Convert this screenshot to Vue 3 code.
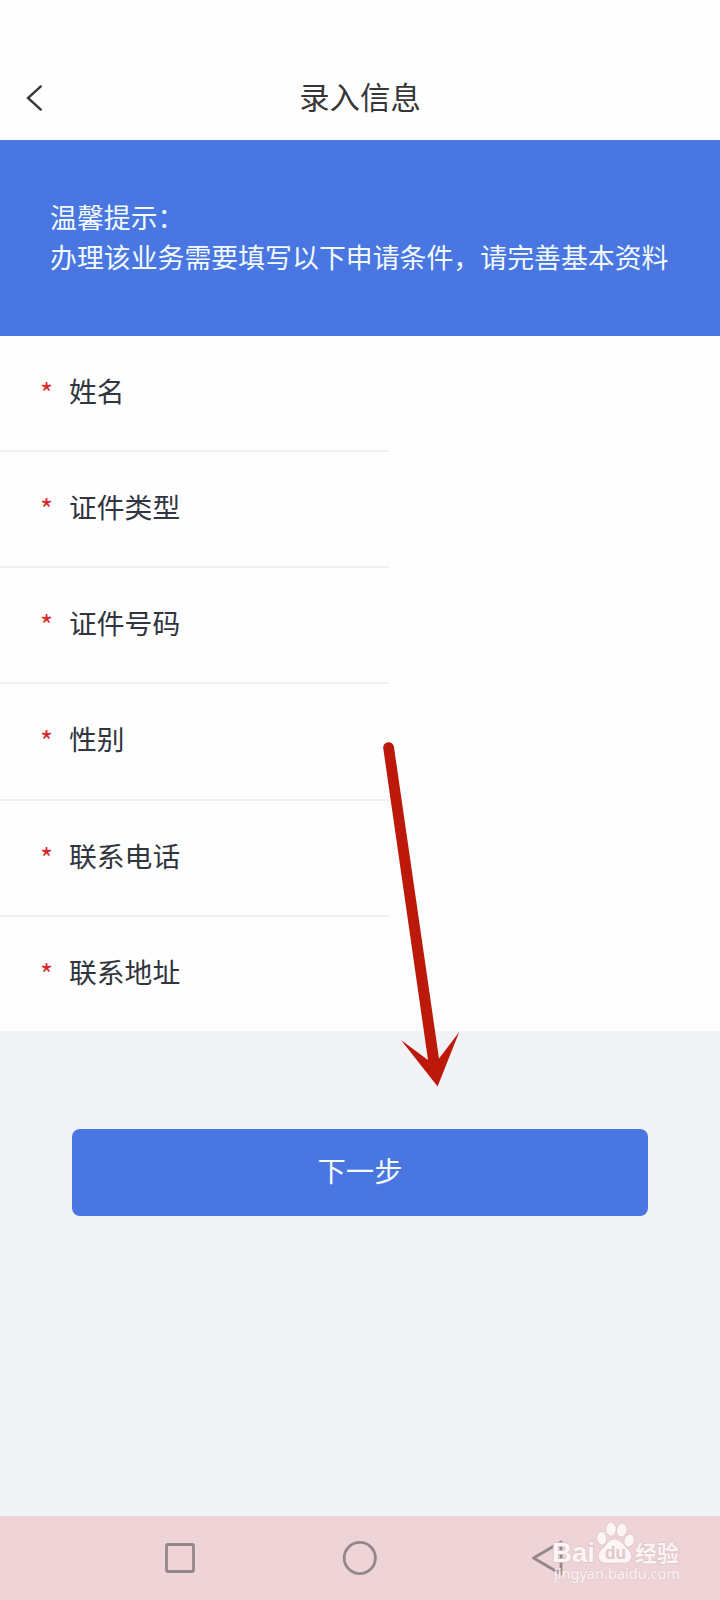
<script setup>
const fields = ['姓名', '证件类型', '证件号码', '性别', '联系电话', '联系地址']
</script>

<template>
  <div class="screen">
    <header class="header">
      <svg class="back" width="18" height="28" viewBox="0 0 18 28">
        <path d="M15.8 2.4 L3 14 L15.8 25.6" />
      </svg>
      <h1>录入信息</h1>
    </header>

    <section class="banner">
      <p>温馨提示：</p>
      <p>办理该业务需要填写以下申请条件，请完善基本资料</p>
    </section>

    <ul class="fields">
      <li v-for="name in fields" :key="name">
        <span class="star">*</span>
        <span class="label">{{ name }}</span>
      </li>
    </ul>

    <main class="action">
      <button type="button">下一步</button>
    </main>

    <nav class="nav">
      <svg width="40" height="40" viewBox="0 0 40 40">
        <rect x="6.5" y="6.5" width="27" height="27" rx="1.5" />
      </svg>
      <svg width="40" height="40" viewBox="0 0 40 40">
        <circle cx="19.8" cy="20" r="15.6" />
      </svg>
      <svg width="50" height="40" viewBox="0 0 50 40">
        <path d="M18.5 20 L46 4 V36 Z" />
      </svg>
    </nav>

    <svg class="arrow" width="130" height="350" viewBox="340 740 130 350">
      <path d="M383.2 748 A5.4 5.4 0 0 1 394 747.2 L439 1058.5 L459.2 1032 L437.6 1086.5 L401 1040 L428 1060 Z" />
    </svg>

    <svg class="watermark" width="136" height="68" viewBox="548 1518 136 68">
      <g class="mark">
        <text x="552" y="1561.8" class="brand" textLength="43" lengthAdjust="spacingAndGlyphs">Bai</text>
        <ellipse cx="601.7" cy="1538.3" rx="4.6" ry="6.4" transform="rotate(-8 601.7 1538.3)" />
        <ellipse cx="611" cy="1529.2" rx="4.8" ry="6.6" />
        <ellipse cx="621.8" cy="1530" rx="4.8" ry="6.6" transform="rotate(8 621.8 1530)" />
        <ellipse cx="629.2" cy="1540.5" rx="4.7" ry="6.2" transform="rotate(15 629.2 1540.5)" />
        <path d="M614.5 1539.5 C621 1539.5 623 1545 627 1548.5 C631 1552 632.5 1556 630.5 1559.5 C628 1564 623 1562.7 615 1562.7 C607 1562.7 602 1564 599.5 1559.5 C597.5 1556 599 1552 603 1548.5 C607 1545 608 1539.5 614.5 1539.5 Z" />
        <text x="635" y="1560.5" class="cn" textLength="44" lengthAdjust="spacingAndGlyphs">经验</text>
        <text x="554" y="1578.5" class="site" textLength="126" lengthAdjust="spacingAndGlyphs">jingyan.baidu.com</text>
      </g>
      <text x="605" y="1559" class="du" textLength="21" lengthAdjust="spacingAndGlyphs">du</text>
    </svg>
  </div>
</template>

<style>
body {
  margin: 0;
}
</style>

<style scoped>
.screen {
  position: relative;
  display: flex;
  flex-direction: column;
  width: 720px;
  height: 1600px;
  overflow: hidden;
  background: #f1f3f7;
  font-family: "Noto Sans CJK SC", sans-serif;
}
.header {
  display: grid;
  grid-template-columns: 60px 1fr 60px;
  align-items: center;
  box-sizing: border-box;
  height: 140px;
  padding-top: 56px;
  background: #fefefe;
}
.back {
  margin-left: 25px;
}
.back path {
  fill: none;
  stroke: #38393b;
  stroke-width: 2.4;
  stroke-linecap: round;
}
h1 {
  margin: 0;
  padding-bottom: 4px;
  color: #363636;
  font-size: 30.4px;
  font-weight: 400;
  line-height: 40px;
  text-align: center;
}
.banner {
  box-sizing: border-box;
  height: 196px;
  padding: 57px 0 0 50px;
  background: #4976e1;
  color: #f2fbff;
  font-size: 26.9px;
  line-height: 40px;
  white-space: nowrap;
}
.banner p {
  margin: 0;
}
.fields {
  margin: 0;
  padding: 0;
  list-style: none;
  background: #fefefe;
}
li {
  display: flex;
  align-items: center;
  box-sizing: border-box;
  width: 389px;
  height: 116px;
  padding: 0 0 6px 40px;
  border-bottom: 2px solid #f0f0f1;
}
li:nth-child(4) {
  height: 117px;
  padding-bottom: 8px;
}
li:last-child {
  height: 114px;
  border-bottom: 0;
}
.star {
  width: 29px;
  padding-top: 4px;
  color: #d5292c;
  font-size: 28px;
  line-height: 40px;
}
.label {
  color: #30353f;
  font-size: 27.8px;
  line-height: 40px;
}
.action {
  flex: 1;
  padding: 98px 72px 0;
}
button {
  display: block;
  width: 100%;
  height: 87px;
  padding: 0 0 6px;
  border: 0;
  border-radius: 8px;
  background: #4976e1;
  color: #f2fbff;
  font: 400 28.4px/40px "Noto Sans CJK SC", sans-serif;
}
.nav {
  display: grid;
  grid-template-columns: repeat(3, 180px);
  justify-content: center;
  justify-items: center;
  align-items: center;
  height: 84px;
  background: #eed3d7;
}
.nav svg {
  fill: none;
  stroke: #938887;
  stroke-width: 2.8;
  stroke-linejoin: round;
}
.arrow {
  position: absolute;
  left: 340px;
  top: 740px;
  fill: #bd190b;
}
.watermark {
  position: absolute;
  left: 548px;
  top: 1518px;
}
.mark {
  fill: #fcf4f5;
  stroke: #dcc6ca;
  stroke-width: 1.4;
  paint-order: stroke;
}
.brand {
  font: 700 27px "Liberation Sans", sans-serif;
}
.cn {
  font: 700 22px "Noto Sans CJK SC", sans-serif;
}
.site {
  stroke-width: 0.8;
  font: 400 15px "Noto Sans", sans-serif;
}
.du {
  fill: #dfc8cc;
  font: 700 18px "Liberation Sans", sans-serif;
}
</style>
